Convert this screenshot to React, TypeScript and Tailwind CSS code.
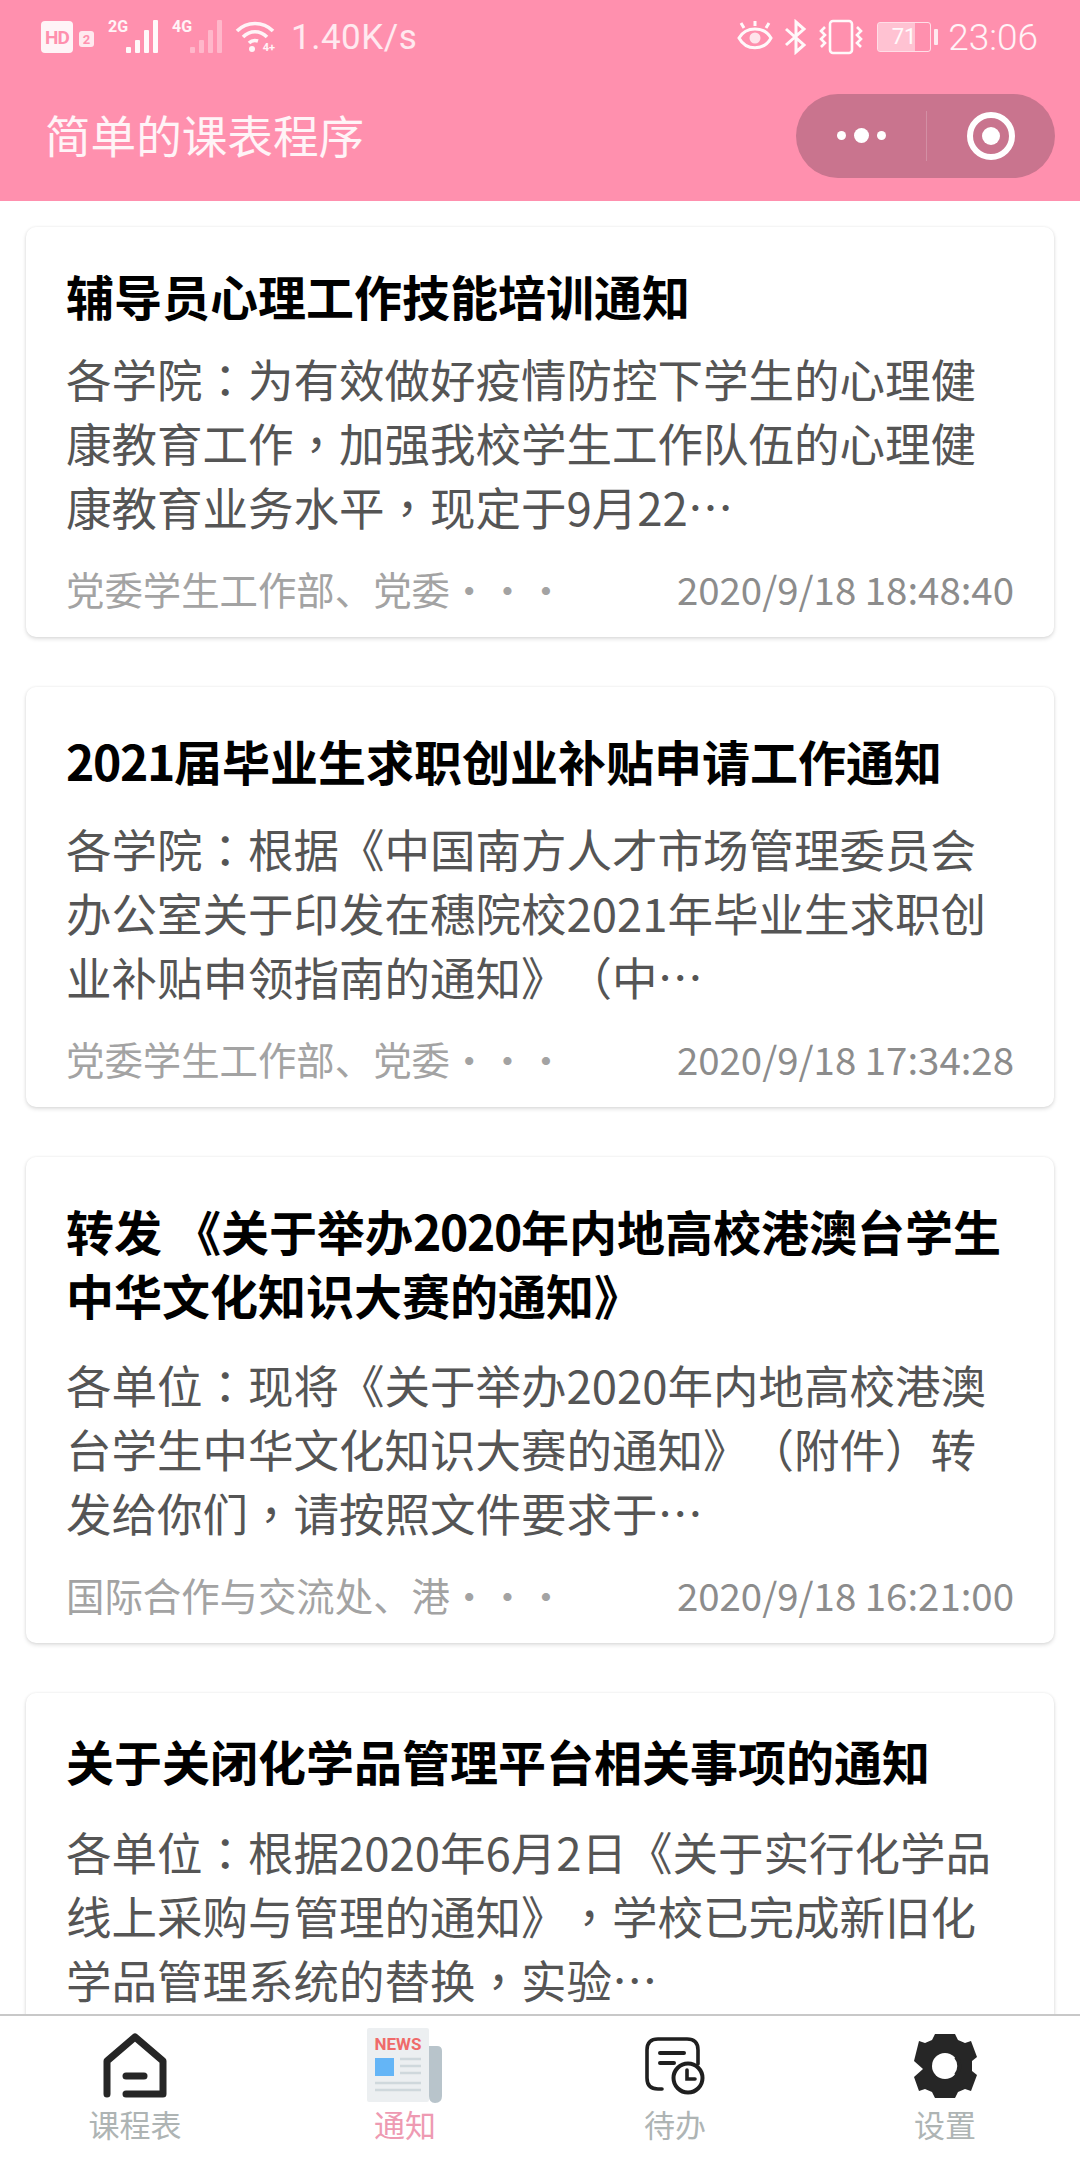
import React from 'react';

interface Notice {
  title: string[];
  lines: string[];
  from: string;
  time: string;
  top: string;
  gap: string;
}

const notices: Notice[] = [
  {
    title: ['辅导员心理工作技能培训通知'],
    lines: ['各学院：为有效做好疫情防控下学生的心理健', '康教育工作，加强我校学生工作队伍的心理健', '康教育业务水平，现定于9月22…'],
    from: '党委学生工作部、党委',
    time: '2020/9/18 18:48:40',
    top: 'pt-[36px]',
    gap: 'mt-[19px]',
  },
  {
    title: ['2021届毕业生求职创业补贴申请工作通知'],
    lines: ['各学院：根据《中国南方人才市场管理委员会', '办公室关于印发在穗院校2021年毕业生求职创', '业补贴申领指南的通知》（中…'],
    from: '党委学生工作部、党委',
    time: '2020/9/18 17:34:28',
    top: 'pt-[41px]',
    gap: 'mt-[24px]',
  },
  {
    title: ['转发 《关于举办2020年内地高校港澳台学生', '中华文化知识大赛的通知》'],
    lines: ['各单位：现将《关于举办2020年内地高校港澳', '台学生中华文化知识大赛的通知》（附件）转', '发给你们，请按照文件要求于…'],
    from: '国际合作与交流处、港',
    time: '2020/9/18 16:21:00',
    top: 'pt-[41px]',
    gap: 'mt-[26px]',
  },
  {
    title: ['关于关闭化学品管理平台相关事项的通知'],
    lines: ['各单位：根据2020年6月2日《关于实行化学品', '线上采购与管理的通知》，学校已完成新旧化', '学品管理系统的替换，实验…'],
    from: '',
    time: '',
    top: 'pt-[35px]',
    gap: 'mt-[27px]',
  },
];

// colon, comma and parens sit centred in the TC cut of the font
const Line = ({ text }: { text: string }) => (
  <div className="h-[64px] whitespace-nowrap leading-[64px] [text-spacing-trim:space-all]">
    {text.split(/([：，（）])/).map((part, i) =>
      /^[：，（）]$/.test(part) ? (
        <span key={i} className="font-['Noto_Sans_CJK_TC']">
          {part}
        </span>
      ) : (
        <span key={i}>{part}</span>
      ),
    )}
  </div>
);

// digits in the bold titles run a little tighter than the CJK around them
const TitleLine = ({ text }: { text: string }) => (
  <div className="h-[64px] whitespace-nowrap text-[48px] font-bold leading-[64px] text-black [text-spacing-trim:space-all]">
    {text.split(/(\d+)/).map((part, i) =>
      /^\d+$/.test(part) ? (
        <span key={i} className="tracking-[-1.3px]">
          {part}
        </span>
      ) : (
        <span key={i}>{part}</span>
      ),
    )}
  </div>
);

const NoticeCard = ({ notice }: { notice: Notice }) => (
  <div className={`mx-[26px] shrink-0 rounded-[10px] bg-white px-[40px] pb-[21px] shadow-[0_2px_4px_rgba(0,0,0,0.13),0_0_3px_rgba(0,0,0,0.07)] ${notice.top}`}>
    {notice.title.map((t) => (
      <TitleLine key={t} text={t} />
    ))}
    <div className={`text-[45.5px] text-[#555555] ${notice.gap}`}>
      {notice.lines.map((l) => (
        <Line key={l} text={l} />
      ))}
    </div>
    {notice.from && (
      <div className="mt-[22px] flex h-[56px] items-center justify-between text-[38.4px] leading-[56px]">
        <span className="whitespace-nowrap text-[#a3a3a3]">{notice.from}・・・</span>
        <span className="whitespace-nowrap text-[#8c8c8c]">{notice.time}</span>
      </div>
    )}
  </div>
);

const Signal = ({ tag, fade }: { tag: string; fade?: boolean }) => (
  <div className="relative h-[34px] w-[54px]">
    <span className="absolute -top-[1px] left-0 text-[16px] font-bold leading-[16px] text-white/90">{tag}</span>
    <svg width="54" height="34" viewBox="0 0 54 34" fill="white" opacity={fade ? 0.35 : 0.95}>
      <rect x="18" y="27" width="5" height="6" rx="1" />
      <rect x="27" y="20" width="5" height="13" rx="1" />
      <rect x="36" y="10" width="5" height="23" rx="1" />
      <rect x="45" y="0" width="5" height="33" rx="1" />
    </svg>
  </div>
);

const StatusBar = () => (
  <div className="flex h-[72px] items-center justify-between pl-[41px] pr-[42px] pt-[2px] font-['Roboto',sans-serif] text-white/80">
    <div className="flex items-center">
      <span className="flex h-[32px] w-[32px] items-center justify-center rounded-[4px] bg-white/90 text-[19px] font-bold leading-none tracking-[-1px] text-[#ff90ae]">
        HD
      </span>
      <span className="ml-[6px] mt-[4px] flex h-[16px] w-[15px] items-center justify-center rounded-[3px] bg-white/80 text-[13px] font-bold leading-none text-[#ff90ae]">
        2
      </span>
      <div className="ml-[14px]">
        <Signal tag="2G" />
      </div>
      <div className="ml-[10px]">
        <Signal tag="4G" fade />
      </div>
      <div className="relative ml-[9px] h-[34px] w-[40px]">
        <svg width="40" height="34" viewBox="0 0 40 34" fill="none" stroke="white" strokeWidth="3.6" opacity="0.9">
          <path d="M2 11 C12 1 28 1 38 11" />
          <path d="M8 17 C15 10 25 10 32 17" />
          <path d="M14 23 C17 20 20 20 23 21" />
          <circle cx="17" cy="29" r="3" fill="white" stroke="none" />
        </svg>
        <span className="absolute bottom-0 right-0 text-[11px] font-bold leading-[12px] text-white/90">4+</span>
      </div>
      <span className="ml-[16px] text-[35px] leading-none tracking-[0.5px]">1.40K/s</span>
    </div>
    <div className="flex items-center">
      <svg width="38" height="34" viewBox="0 0 38 34" fill="none" stroke="white" strokeWidth="3" opacity="0.95">
        <path d="M3 18 C10 6 28 6 35 18 C28 31 10 31 3 18Z" />
        <circle cx="19" cy="18" r="5.5" fill="white" stroke="none" opacity="0.8" />
        <path d="M8 8 L5 3 M19 6 V1 M30 8 L33 3" />
      </svg>
      <svg className="ml-[9px]" width="26" height="36" viewBox="0 0 26 36" fill="none" stroke="white" strokeWidth="3" opacity="0.95">
        <path d="M3 10 L21 26 L13 33 V3 L21 10 L3 26" />
      </svg>
      <svg className="ml-[10px]" width="44" height="36" viewBox="0 0 44 36" fill="none" stroke="white" strokeWidth="2.6" opacity="0.95">
        <rect x="11" y="2" width="22" height="32" rx="3" />
        <path d="M6 8 L2 12 L6 16 L2 20 L6 24 L2 28 M38 8 L42 12 L38 16 L42 20 L38 24 L42 28" />
      </svg>
      <div className="ml-[14px] flex items-center">
        <div className="relative h-[30px] w-[54px] overflow-hidden rounded-[3px] border border-white/70">
          <div className="h-full w-[71%] bg-white/45" />
          <span className="absolute inset-0 flex items-center justify-center text-[22px] leading-none text-white/90">71</span>
        </div>
        <div className="ml-[3px] h-[16px] w-[4px] rounded-[1px] bg-white/80" />
      </div>
      <span className="ml-[10px] text-[37px] font-light leading-none text-white/90">23:06</span>
    </div>
  </div>
);

const NavBar = () => (
  <div className="flex h-[129px] items-center justify-between pb-[4px] pl-[45px] pr-[25px]">
    <span className="text-[45.6px] leading-none text-white/90">简单的课表程序</span>
    <div className="mt-[2px] flex h-[84px] w-[259px] items-center rounded-full bg-[#c9748e]">
      <div className="flex w-[130px] items-center justify-center gap-[8px]">
        <span className="h-[9px] w-[9px] rounded-full bg-white" />
        <span className="h-[15px] w-[15px] rounded-full bg-white" />
        <span className="h-[9px] w-[9px] rounded-full bg-white" />
      </div>
      <div className="h-[50px] w-px bg-white/20" />
      <div className="flex flex-1 items-center justify-center">
        <div className="flex h-[48px] w-[48px] items-center justify-center rounded-full border-[6px] border-white">
          <span className="h-[18px] w-[18px] rounded-full bg-white" />
        </div>
      </div>
    </div>
  </div>
);

const HomeIcon = () => (
  <svg width="66" height="66" viewBox="0 0 66 66" fill="none" stroke="#262626" strokeWidth="7" strokeLinecap="round" strokeLinejoin="round">
    <path d="M5 61 V28 L33 4 L61 28 V61 H24" />
    <path d="M24 43 H42" />
  </svg>
);

const NewsIcon = () => (
  <svg width="76" height="76" viewBox="0 0 76 76">
    <rect x="0" y="0" width="62" height="74" rx="2" fill="#eceff1" />
    <path d="M62 18 H70 Q75 18 75 23 V68 Q75 75 68 75 Q62 75 62 68 Z" fill="#b8c4cb" />
    <text x="31" y="22" textAnchor="middle" fontSize="17" fontWeight="700" fill="#ef6a6a" fontFamily="Roboto, sans-serif">
      NEWS
    </text>
    <rect x="8" y="30" width="19" height="18" fill="#64b5f6" />
    <path d="M33 31 H54 M33 38 H54 M33 45 H54 M8 55 H54 M8 62 H54" stroke="#cfd8dc" strokeWidth="2.5" />
  </svg>
);

const TodoIcon = () => (
  <svg width="62" height="60" viewBox="0 0 62 60" fill="none" stroke="#1f1f1f" strokeWidth="3.6" strokeLinecap="round">
    <path d="M54 28 V14 Q54 3 43 3 H14 Q3 3 3 14 V42 Q3 53 14 53 H18" />
    <path d="M16 17 H40 M16 27 H30" strokeWidth="4" />
    <circle cx="44" cy="42" r="14.5" strokeWidth="4" />
    <path d="M43 34 V43 H51" strokeWidth="3.6" />
  </svg>
);

const GearIcon = () => (
  <svg width="68" height="66" viewBox="0 0 68 66" fill="#262626">
    <path d="M24 1 H44 L47 7 L54 10 L60 8 L66 24 L61 28 V38 L66 42 L60 58 L54 56 L47 59 L44 65 H24 L21 59 L14 56 L8 58 L3 44 L12 36 L3 28 L8 8 L14 10 L21 7 Z" />
    <circle cx="34" cy="33" r="13" fill="white" />
    <path d="M45 24 A14 14 0 0 1 45 42" fill="none" stroke="#262626" strokeWidth="4" />
  </svg>
);

const tabs = [
  { label: '课程表', icon: <HomeIcon />, active: false },
  { label: '通知', icon: <NewsIcon />, active: true },
  { label: '待办', icon: <TodoIcon />, active: false },
  { label: '设置', icon: <GearIcon />, active: false },
];

const TabBar = () => (
  <div className="grid h-[146px] shrink-0 grid-cols-4 border-t-[2px] border-[#c8c8c8] bg-white">
    {tabs.map((tab) => (
      <div key={tab.label} className="flex flex-col items-center">
        <div className="flex h-[90px] items-center justify-center pt-[9px]">{tab.icon}</div>
        <span className={`text-[31px] leading-[36px] ${tab.active ? 'text-[#ee9ab2]' : 'text-[#aeb4b4]'}`}>{tab.label}</span>
      </div>
    ))}
  </div>
);

const App: React.FC = () => {
  return (
    <div className="flex h-[2160px] w-[1080px] flex-col overflow-hidden bg-white font-['Noto_Sans_CJK_SC','Noto_Sans',sans-serif]">
      <div className="shrink-0 bg-[#ff90ae]">
        <StatusBar />
        <NavBar />
      </div>
      <div className="flex min-h-0 flex-1 flex-col gap-[50px] overflow-hidden pt-[26px]">
        {notices.map((n) => (
          <NoticeCard key={n.time || n.title[0]} notice={n} />
        ))}
      </div>
      <TabBar />
    </div>
  );
};

export default App;
